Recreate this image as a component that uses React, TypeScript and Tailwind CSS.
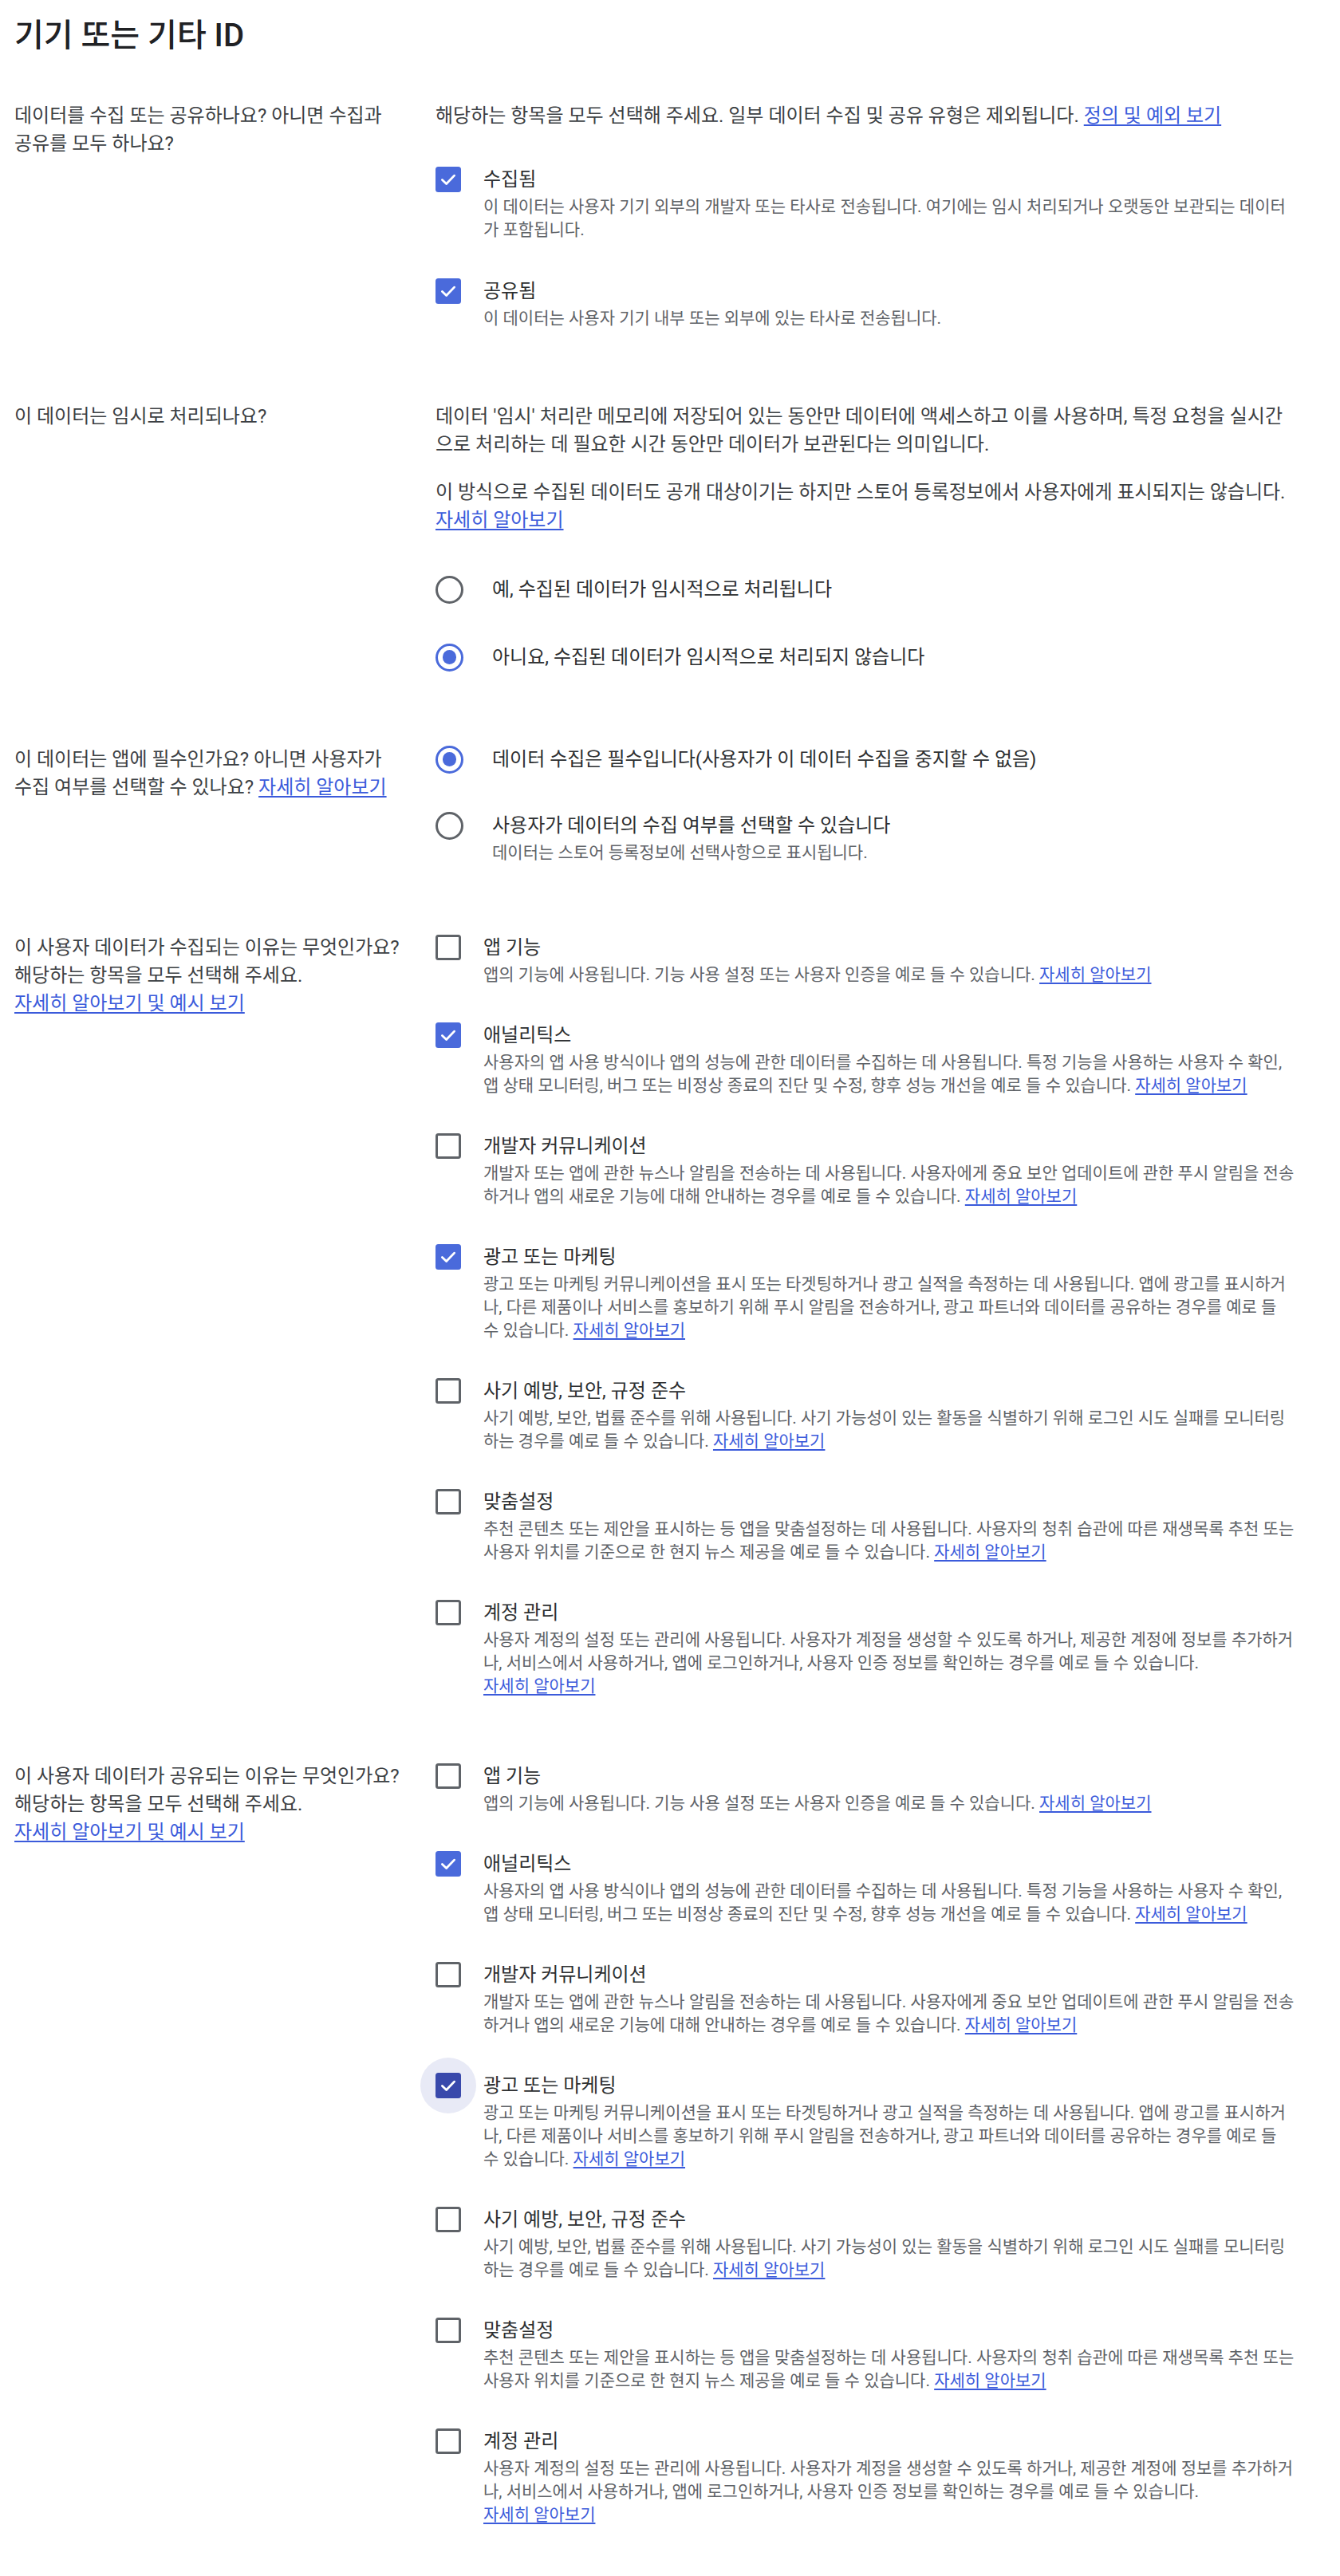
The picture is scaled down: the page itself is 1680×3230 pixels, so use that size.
import React from "react";

const LINK = "whitespace-nowrap text-[#3b5bdb] underline underline-offset-[3px] decoration-[1.5px]";

function Checkbox({ checked, focused }: { checked: boolean; focused?: boolean }) {
  return (
    <div className="relative w-[31.5px] h-[31.5px] shrink-0">
      {focused && (
        <div className="absolute left-1/2 top-1/2 -translate-x-1/2 -translate-y-1/2 w-[70px] h-[70px] rounded-full bg-[#e8eaf6]" />
      )}
      {checked ? (
        <div
          className={`relative w-full h-full rounded-[3.5px] flex items-center justify-center ${
            focused ? "bg-[#3949ab]" : "bg-[#4a6adb]"
          }`}
        >
          <svg viewBox="0 0 24 24" className="w-[26px] h-[26px]">
            <polyline
              points="5,12.5 9.8,17 19,7.5"
              fill="none"
              stroke="white"
              strokeWidth="2.6"
              strokeLinecap="round"
              strokeLinejoin="round"
            />
          </svg>
        </div>
      ) : (
        <div className="relative w-full h-full rounded-[3.5px] border-[3.5px] border-[#5f6368]" />
      )}
    </div>
  );
}

function Radio({ checked }: { checked: boolean }) {
  return (
    <div
      className={`w-[35px] h-[35px] shrink-0 rounded-full border-[3.5px] flex items-center justify-center ${
        checked ? "border-[#4a6adb]" : "border-[#5f6368]"
      }`}
    >
      {checked && <div className="w-[17.5px] h-[17.5px] rounded-full bg-[#4a6adb]" />}
    </div>
  );
}

function CheckItem({
  label,
  desc,
  checked,
  focused,
  link = true,
}: {
  label: string;
  desc: string;
  checked: boolean;
  focused?: boolean;
  link?: boolean;
}) {
  return (
    <div className="flex">
      <div className="h-[40px] flex items-center">
        <Checkbox checked={checked} focused={focused} />
      </div>
      <div className="ml-[28.5px] w-[1017.5px]">
        <div className="text-[24px] leading-[40px] text-[#2d2f31]">{label}</div>
        <div className="text-[21px] leading-[29px] text-[#5f6368]">
          {desc}
          {link && (
            <>
              {" "}
              <a className={LINK}>자세히 알아보기</a>
            </>
          )}
        </div>
      </div>
    </div>
  );
}

function RadioItem({ label, desc, checked }: { label: string; desc?: string; checked: boolean }) {
  return (
    <div className="flex">
      <div className="h-[40px] flex items-center">
        <Radio checked={checked} />
      </div>
      <div className="ml-[36px] w-[1006.5px]">
        <div className="text-[24px] leading-[40px] text-[#2d2f31]">{label}</div>
        {desc && <div className="text-[21px] leading-[29px] text-[#5f6368]">{desc}</div>}
      </div>
    </div>
  );
}

const purposes = [
  {
    label: "앱 기능",
    desc: "앱의 기능에 사용됩니다. 기능 사용 설정 또는 사용자 인증을 예로 들 수 있습니다.",
  },
  {
    label: "애널리틱스",
    desc: "사용자의 앱 사용 방식이나 앱의 성능에 관한 데이터를 수집하는 데 사용됩니다. 특정 기능을 사용하는 사용자 수 확인, 앱 상태 모니터링, 버그 또는 비정상 종료의 진단 및 수정, 향후 성능 개선을 예로 들 수 있습니다.",
  },
  {
    label: "개발자 커뮤니케이션",
    desc: "개발자 또는 앱에 관한 뉴스나 알림을 전송하는 데 사용됩니다. 사용자에게 중요 보안 업데이트에 관한 푸시 알림을 전송하거나 앱의 새로운 기능에 대해 안내하는 경우를 예로 들 수 있습니다.",
  },
  {
    label: "광고 또는 마케팅",
    desc: "광고 또는 마케팅 커뮤니케이션을 표시 또는 타겟팅하거나 광고 실적을 측정하는 데 사용됩니다. 앱에 광고를 표시하거나, 다른 제품이나 서비스를 홍보하기 위해 푸시 알림을 전송하거나, 광고 파트너와 데이터를 공유하는 경우를 예로 들 수 있습니다.",
  },
  {
    label: "사기 예방, 보안, 규정 준수",
    desc: "사기 예방, 보안, 법률 준수를 위해 사용됩니다. 사기 가능성이 있는 활동을 식별하기 위해 로그인 시도 실패를 모니터링하는 경우를 예로 들 수 있습니다.",
  },
  {
    label: "맞춤설정",
    desc: "추천 콘텐츠 또는 제안을 표시하는 등 앱을 맞춤설정하는 데 사용됩니다. 사용자의 청취 습관에 따른 재생목록 추천 또는 사용자 위치를 기준으로 한 현지 뉴스 제공을 예로 들 수 있습니다.",
  },
  {
    label: "계정 관리",
    desc: "사용자 계정의 설정 또는 관리에 사용됩니다. 사용자가 계정을 생성할 수 있도록 하거나, 제공한 계정에 정보를 추가하거나, 서비스에서 사용하거나, 앱에 로그인하거나, 사용자 인증 정보를 확인하는 경우를 예로 들 수 있습니다.",
  },
];

const checkedSet = [false, true, false, true, false, false, false];

function PurposeList({ focusIndex }: { focusIndex?: number }) {
  return (
    <div className="flex flex-col gap-[41px]">
      {purposes.map((p, i) => (
        <CheckItem key={p.label} label={p.label} desc={p.desc} checked={checkedSet[i]} focused={focusIndex === i} />
      ))}
    </div>
  );
}

const LEFT = "w-[495px] shrink-0 break-keep text-[24px] leading-[35px] text-[#3c4043]";
const RIGHT = "ml-[33px] w-[1077.5px]";

export default function App() {
  return (
    <div className="w-full bg-white pl-[18px] pt-[21px] pb-[62px] font-['Roboto','Noto_Sans_CJK_KR',sans-serif]">
      <h1 className="text-[40px] leading-[48px] font-medium text-[#202124]">기기 또는 기타 ID</h1>

      {/* Section 1 */}
      <div className="flex mt-[58.5px]">
        <div className={LEFT}>데이터를 수집 또는 공유하나요? 아니면 수집과 공유를 모두 하나요?</div>
        <div className={RIGHT}>
          <div className="text-[24px] leading-[35px] text-[#3c4043]">
            해당하는 항목을 모두 선택해 주세요. 일부 데이터 수집 및 공유 유형은 제외됩니다.{" "}
            <a className={LINK}>정의 및 예외 보기</a>
          </div>
          <div className="mt-[42.5px] flex flex-col gap-[42px]">
            <CheckItem
              label="수집됨"
              desc="이 데이터는 사용자 기기 외부의 개발자 또는 타사로 전송됩니다. 여기에는 임시 처리되거나 오랫동안 보관되는 데이터가 포함됩니다."
              checked
              link={false}
            />
            <CheckItem
              label="공유됨"
              desc="이 데이터는 사용자 기기 내부 또는 외부에 있는 타사로 전송됩니다."
              checked
              link={false}
            />
          </div>
        </div>
      </div>

      {/* Section 2 */}
      <div className="flex mt-[90.5px]">
        <div className={LEFT}>이 데이터는 임시로 처리되나요?</div>
        <div className={RIGHT}>
          <p className="text-[24px] leading-[35px] text-[#3c4043]">
            데이터 '임시' 처리란 메모리에 저장되어 있는 동안만 데이터에 액세스하고 이를 사용하며, 특정 요청을 실시간으로 처리하는 데 필요한 시간 동안만 데이터가 보관된다는 의미입니다.
          </p>
          <p className="mt-[25px] text-[24px] leading-[35px] text-[#3c4043]">
            이 방식으로 수집된 데이터도 공개 대상이기는 하지만 스토어 등록정보에서 사용자에게 표시되지는 않습니다.{" "}
            <a className={LINK}>자세히 알아보기</a>
          </p>
          <div className="mt-[49.5px] flex flex-col gap-[45px]">
            <RadioItem label="예, 수집된 데이터가 임시적으로 처리됩니다" checked={false} />
            <RadioItem label="아니요, 수집된 데이터가 임시적으로 처리되지 않습니다" checked />
          </div>
        </div>
      </div>

      {/* Section 3 */}
      <div className="flex mt-[88px]">
        <div className={`${LEFT} pt-[2.5px]`}>
          이 데이터는 앱에 필수인가요? 아니면 사용자가 수집 여부를 선택할 수 있나요?{" "}
          <a className={LINK}>자세히 알아보기</a>
        </div>
        <div className={RIGHT}>
          <div className="flex flex-col gap-[43px]">
            <RadioItem label="데이터 수집은 필수입니다(사용자가 이 데이터 수집을 중지할 수 없음)" checked />
            <RadioItem
              label="사용자가 데이터의 수집 여부를 선택할 수 있습니다"
              desc="데이터는 스토어 등록정보에 선택사항으로 표시됩니다."
              checked={false}
            />
          </div>
        </div>
      </div>

      {/* Section 4 */}
      <div className="flex mt-[84px]">
        <div className={`${LEFT} pt-[2.5px]`}>
          이 사용자 데이터가 수집되는 이유는 무엇인가요?
          <br />
          해당하는 항목을 모두 선택해 주세요.
          <br />
          <a className={LINK}>자세히 알아보기 및 예시 보기</a>
        </div>
        <div className={RIGHT}>
          <PurposeList />
        </div>
      </div>

      {/* Section 5 */}
      <div className="flex mt-[78px]">
        <div className={`${LEFT} pt-[2.5px]`}>
          이 사용자 데이터가 공유되는 이유는 무엇인가요?
          <br />
          해당하는 항목을 모두 선택해 주세요.
          <br />
          <a className={LINK}>자세히 알아보기 및 예시 보기</a>
        </div>
        <div className={RIGHT}>
          <PurposeList focusIndex={3} />
        </div>
      </div>
    </div>
  );
}
